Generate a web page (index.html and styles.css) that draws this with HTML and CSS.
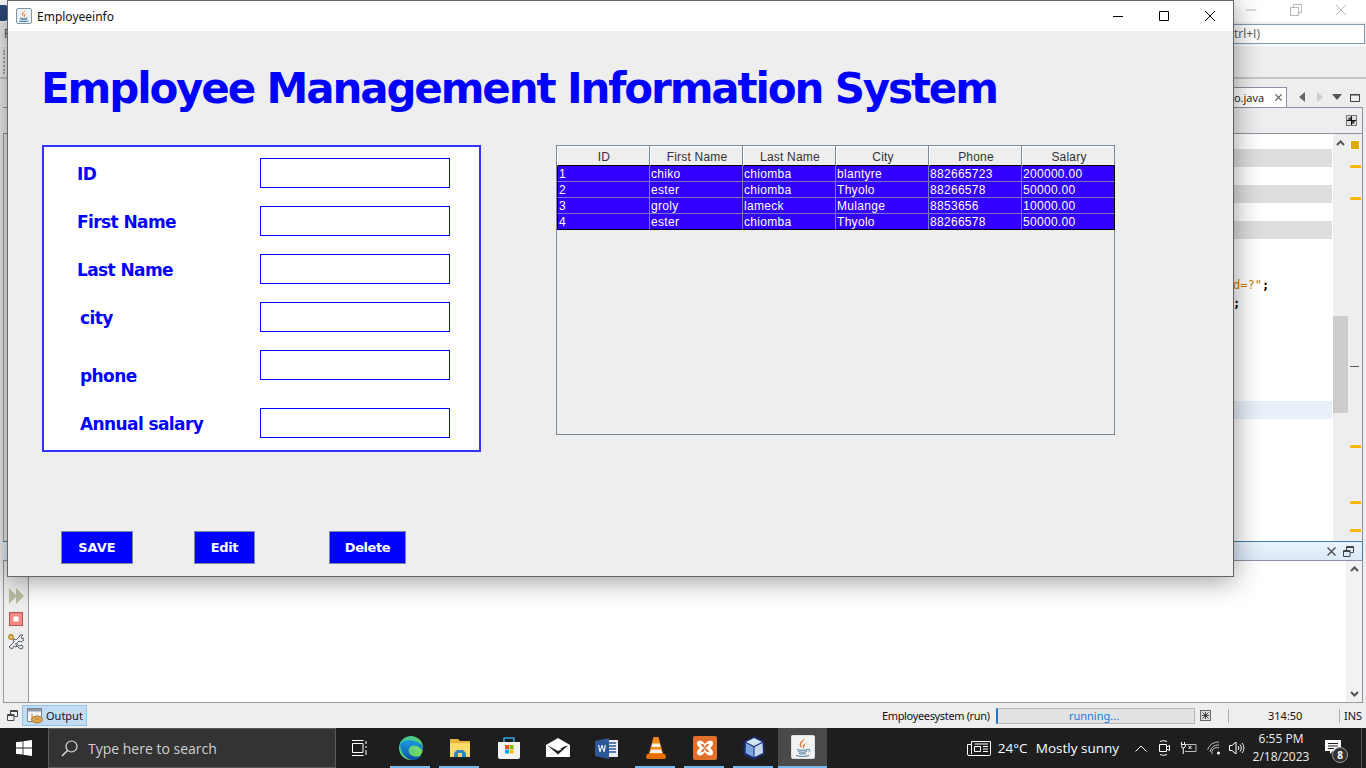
FILE: index.html
```html
<!DOCTYPE html>
<html lang="en">
<head>
<meta charset="utf-8">
<title>Employeeinfo</title>
<link rel="stylesheet" href="styles.css">
</head>
<body>
<div class="ide">
  <div class="ide-title">
    <svg class="ide-logo" width="8" height="16" viewBox="0 0 8 16"><rect x="-8" y="0" width="16" height="16" rx="4" fill="#2c4a78"/></svg>
    <div class="ide-ctrls">
      <svg width="14" height="14" viewBox="0 0 14 14"><path d="M2 7h10" stroke="#b5b5b5" fill="none"/></svg>
      <svg width="14" height="14" viewBox="0 0 14 14"><path d="M1.500 4.500h8v8h-8zM4.500 4.500v-3h8v8h-3" stroke="#b5b5b5" fill="none"/></svg>
      <svg width="14" height="14" viewBox="0 0 14 14"><path d="M2 2l10 10M12 2L2 12" stroke="#b5b5b5" fill="none"/></svg>
    </div>
  </div>
  <div class="ide-menu">
    <span class="menu-letter">F</span>
    <div class="quick-search">trl+I)</div>
  </div>
  <div class="ide-toolbar"><span class="grip"></span></div>
  <div class="workspace">
    <div class="editor-tabs">
      <div class="tab"><span>o.java</span><svg width="9" height="9" viewBox="0 0 9 9"><path d="M.5.5l8 8M8.500.5l-8 8" stroke="#555" stroke-width="1.500" fill="none"/></svg></div>
      <div class="tab-nav">
        <svg width="8" height="12" viewBox="0 0 8 12"><path d="M7 1v10L1 6z" fill="#666"/></svg>
        <svg class="nav-next" width="8" height="12" viewBox="0 0 8 12"><path d="M1 1v10l6-5z" fill="#ccc"/></svg>
        <svg width="12" height="8" viewBox="0 0 12 8"><path d="M1 1h10L6 7z" fill="#555"/></svg>
        <svg width="10" height="9" viewBox="0 0 10 9"><path d="M.5 1.500h9v7h-9z" fill="none" stroke="#444"/><path d="M0 1h10v1.500H0z" fill="#444"/></svg>
      </div>
    </div>
    <div class="editor-toolbar">
      <svg width="11" height="11" viewBox="0 0 11 11"><rect x=".5" y=".5" width="10" height="10" fill="#ddd" stroke="#777"/><path d="M5.500 1v9M1 5.500h9M3 3h2v2H3zM6 6h2v2H6z" stroke="#111" fill="none"/></svg>
    </div>
    <div class="editor-body">
      <div class="side"></div>
      <div class="code">
        <div class="line hl"></div><div class="line"></div>
        <div class="line hl"></div><div class="line"></div>
        <div class="line hl"></div><div class="line"></div>
        <div class="line"></div>
        <div class="line"><span class="str">d=?"</span><span class="semi">;</span></div>
        <div class="line"><span class="semi">;</span></div>
        <div class="line"></div><div class="line"></div><div class="line"></div>
        <div class="line"></div><div class="line"></div>
        <div class="line cur"></div>
      </div>
      <div class="scrollbar"><svg class="up" width="9" height="6" viewBox="0 0 9 6"><path d="M1 5l3.500-3.500L8 5" stroke="#555" stroke-width="2" fill="none"/></svg><div class="thumb"></div></div>
      <div class="gutter">
        <span class="sq"></span>
        <span class="mark m1"></span><span class="mark m2"></span>
        <span class="dot"></span>
        <span class="mark m3"></span><span class="mark m4"></span><span class="mark m5"></span>
      </div>
    </div>
    <div class="output-title">
      <svg width="9" height="9" viewBox="0 0 9 9"><path d="M.5.5l8 8M8.500.5l-8 8" stroke="#555" stroke-width="1.500" fill="none"/></svg>
      <svg width="11" height="11" viewBox="0 0 11 11"><path d="M.5 4.500h6.500v6H.5zM.5 5.500h6.500M3.500 4V.5h7v6H7.500M3.500 1.500h7" fill="none" stroke="#444"/></svg>
    </div>
    <div class="output-body">
      <div class="out-strip">
        <svg width="15" height="16" viewBox="0 0 15 16"><path d="M0 0l8 8-8 8zM7 0l8 8-8 8z" fill="#b8baa0"/></svg>
        <svg class="stop" width="14" height="14" viewBox="0 0 14 14"><rect x=".5" y=".5" width="13" height="13" fill="#f58a84" stroke="#b05550"/><rect x="4.500" y="4.500" width="5" height="5" fill="#fff"/></svg>
        <svg class="tools" width="16" height="16" viewBox="0 0 16 16"><circle cx="3" cy="3" r="2.200" fill="none" stroke="#b8860b" stroke-width="1.400"/><circle cx="3" cy="3" r=".7" fill="#b8860b"/><path d="M1 13l5-5-1-2 1-1 2 1 3-3 1-2h3l-2 2 1 2 2-1v2l-3 2-2-1-3 3 1 2-1 1-2-1-2 3z" fill="#eef0f2" stroke="#5a5f66"/><path d="M8 9l3 3 3-1 1 2-1 2-3-1-3-3z" fill="#eef0f2" stroke="#5a5f66"/></svg>
      </div>
      <div class="out-text"></div>
      <div class="out-scroll">
        <svg width="9" height="6" viewBox="0 0 9 6"><path d="M1 5l3.500-3.500L8 5" stroke="#555" stroke-width="2" fill="none"/></svg>
        <svg width="9" height="6" viewBox="0 0 9 6"><path d="M1 1l3.500 3.500L8 1" stroke="#555" stroke-width="2" fill="none"/></svg>
      </div>
    </div>
  </div>
  <div class="statusbar">
    <svg class="st-restore" width="11" height="11" viewBox="0 0 11 11"><path d="M.5 4.500h6.500v6H.5zM.5 5.500h6.500M3.500 4V.5h7v6H7.500M3.500 1.500h7" fill="none" stroke="#444"/></svg>
    <div class="output-btn">
      <svg width="16" height="16" viewBox="0 0 16 16"><rect x=".5" y=".5" width="14" height="13" fill="#f4f6f8" stroke="#7c8794"/><path d="M1 1h13v2.500H1z" fill="#8d99a8"/><ellipse cx="10" cy="11.500" rx="5.500" ry="3.500" fill="#e0a850" stroke="#a87a30"/><path d="M5 6v5M8 11h4" stroke="#a87a30"/></svg>
      <span>Output</span>
    </div>
    <span class="st-run">Employeesystem (run)</span>
    <div class="progress">running...</div>
    <svg class="st-stop" width="11" height="11" viewBox="0 0 11 11"><rect x=".5" y=".5" width="10" height="10" fill="#ddd" stroke="#666"/><path d="M2.500 2.500l6 6M8.500 2.500l-6 6M5.500 2v7M2 5.500h7" stroke="#444" fill="none"/></svg>
    <span class="st-sep"></span>
    <span class="st-pos">314:50</span>
    <span class="st-sep2"></span>
    <span class="st-ins">INS</span>
  </div>
  <div class="taskbar">
    <div class="tb-start">
      <svg width="16" height="16" viewBox="0 0 16 16"><path d="M0 2.300l6.600-.9v6.200H0zM7.400 1.300L16 0v7.600H7.400zM0 8.400h6.600v6.200L0 13.700zM7.400 8.400H16V16l-8.600-1.200z" fill="#fff"/></svg>
    </div>
    <div class="tb-search">
      <svg width="17" height="17" viewBox="0 0 17 17"><circle cx="10.500" cy="6.500" r="5.500" fill="none" stroke="#ddd" stroke-width="1.200"/><path d="M6.500 10.500L1 16" stroke="#ddd" stroke-width="1.400"/></svg>
      <span>Type here to search</span>
    </div>
    <div class="tb-apps">
      <div class="tb-app tv">
        <svg width="16" height="16" viewBox="0 0 16 16"><path d="M.5 3.500h10.500v9H.5zM0 .5h11.500M0 15.500h11.500M14 1v3M14 6v2M14 10v5" stroke="#fff" fill="none"/></svg>
      </div>
      <div class="tb-app edge on">
        <svg width="24" height="24" viewBox="0 0 24 24"><defs><linearGradient id="eg" x1="0" y1="0" x2="1" y2="1"><stop offset="0" stop-color="#35c1a1"/><stop offset="1" stop-color="#7fdc4e"/></linearGradient><linearGradient id="eb" x1="0" y1="0" x2="0" y2="1"><stop offset="0" stop-color="#1a9ce0"/><stop offset="1" stop-color="#0c4fa8"/></linearGradient></defs><circle cx="12" cy="12" r="12" fill="url(#eg)"/><path d="M1 9c1 8 6 15 13 15 4 0 7-2 9-5-3 2-8 2-11 0-3-2-3-6-1-8 2-2 6-2 9 0 3 2 4 4 4 4 1-3-1-7-5-9-7-3-16-2-18 3z" fill="url(#eb)"/><path d="M11 13c1-3 8-3 10 1 0 1-2 2-4 1-1 0-1-2-3-2-1 0-2 0-3 0z" fill="#fff" opacity=".15"/></svg>
      </div>
      <div class="tb-app on">
        <svg width="22" height="20" viewBox="0 0 22 20"><path d="M1 1h8l2 2h10v16H1z" fill="#e8b53c"/><path d="M1 5h20v14H1z" fill="#fbd96a"/><path d="M8 12h6l3 3v4H5v-4z" fill="#2a86c8"/><path d="M9 15h4v4H9z" fill="#fbd96a"/></svg>
      </div>
      <div class="tb-app">
        <svg width="24" height="24" viewBox="0 0 24 24"><path d="M7 6V2h10v4" fill="none" stroke="#28a8e8" stroke-width="1.500"/><path d="M1 6h22v15a2 2 0 0 1-2 2H3a2 2 0 0 1-2-2z" fill="#f3f3f3"/><path d="M8 9h4v4H8z" fill="#f25022"/><path d="M12.500 9h4v4h-4z" fill="#7fba00"/><path d="M8 13.500h4v4H8z" fill="#00a4ef"/><path d="M12.500 13.500h4v4h-4z" fill="#ffb900"/></svg>
      </div>
      <div class="tb-app">
        <svg width="24" height="20" viewBox="0 0 24 20"><path d="M0 7L12 0l12 7v12H0z" fill="#fff"/><path d="M1 7l11 6 4-2-6-1 12-2.500-10 9z" fill="#222"/><path d="M3 7h18l-9 5z" fill="#fff"/></svg>
      </div>
      <div class="tb-app">
        <svg width="23" height="21" viewBox="0 0 23 21"><path d="M6 2h17v17H6z" fill="#e8edf5"/><path d="M14 5h7M14 8h7M14 11h7M14 14h7" stroke="#2b5797" stroke-width="1.500"/><path d="M0 3l14-3v21L0 18z" fill="#2b5797"/><path d="M3 7l1.500 7h1l1.500-5 1.500 5h1L11 7H9.800l-.9 4.700L7.500 7h-1L5.100 11.700 4.200 7z" fill="#fff"/></svg>
      </div>
      <div class="tb-app on">
        <svg width="20" height="22" viewBox="0 0 20 22"><path d="M7.500 0h5l5 18h-15z" fill="#f28a12"/><path d="M6.500 6.500h7l1 3.500h-9zM5 12.500h10l1 3.500H4z" fill="#f4f0e8"/><path d="M1 17h18l1 3c0 1-1 2-2 2H2c-1 0-2-1-2-2z" fill="#e86e08"/></svg>
      </div>
      <div class="tb-app on">
        <svg width="24" height="24" viewBox="0 0 24 24"><rect width="24" height="24" rx="2" fill="#e0702a"/><path d="M5 5c3-1 5 0 7 3 2-3 4-4 7-3 2 2 1 5-2 7 3 2 4 5 2 7-3 1-5 0-7-3-2 3-4 4-7 3-2-2-1-5 2-7-3-2-4-5-2-7zM8 8c0 2 2 3 4 4 2-1 4-2 4-4-2-1-3 1-4 3-1-2-2-4-4-3zM8 16c2 1 3-1 4-3 1 2 2 4 4 3 0-2-2-3-4-4-2 1-4 2-4 4z" fill="#fff" fill-rule="evenodd"/></svg>
      </div>
      <div class="tb-app on">
        <svg width="22" height="24" viewBox="0 0 22 24"><path d="M11 0l10 5 1 13-11 6-10-5L0 6z" fill="#1a2a6c"/><path d="M11 2l8 4-8 4-8-4z" fill="#d0e6f8"/><path d="M3 7l7.500 4v10L2.500 17z" fill="#7aa6e0"/><path d="M11.500 11l8-4 .5 10-8.500 4z" fill="#c4d8f0"/></svg>
      </div>
      <div class="tb-app java">
        <svg width="24" height="24" viewBox="0 0 24 24"><rect width="24" height="24" rx="3" fill="#f2f2f2" stroke="#c8d0d8"/><path d="M13 3c1 3-3 4-3 7 0 1 1 2 1 3-2-1-3-3-2-5 1-2 4-3 4-5zM15 7c0 2-2 3-2 5 0 .5 0 1 .5 1.500-1.500-.5-2-2-1.500-3 .5-1.500 3-2 3-3.500z" fill="#e2701e"/><path d="M6 14.500c2 1 9 1 11 0M7 16.500c2 1 7 1 9 0M8 18.500c2 .7 5 .7 7 0M5 20.500c3 1.200 10 1.200 13 0M17 14.500c2-.5 3 1.500.5 2.500" fill="none" stroke="#4a7a9c" stroke-width="1"/></svg>
      </div>
    </div>
    <div class="tray">
      <svg class="news" width="24" height="16" viewBox="0 0 24 16"><path d="M4.500 1.500h19v13a1 1 0 0 1-1 1H2a1.500 1.500 0 0 1-1.500-1.500V4.500h4zM4.500 4.500V14" fill="none" stroke="#fff"/><path d="M7.500 6.500h6v5h-6z" fill="none" stroke="#fff"/><path d="M16 6.500h5M16 9h5M16 11.500h5M7.500 4h13.500" stroke="#fff" fill="none"/></svg>
      <span class="temp">24°C</span>
      <span class="weather">Mostly sunny</span>
      <svg class="chev" width="12" height="7" viewBox="0 0 12 7"><path d="M.500 6.500L6 1l5.500 5.500" stroke="#fff" fill="none"/></svg>
      <svg class="ti meet" width="12" height="16" viewBox="0 0 12 16"><path d="M2 1.500c2-1 5-1 7 0M2 14.500c2 1 5 1 7 0M1.500 4.500h7v7h-7zM8.500 7l3-1.500v5l-3-1.500" stroke="#fff" fill="none"/></svg>
      <svg class="ti batt" width="16" height="14" viewBox="0 0 16 14"><path d="M.500 1v2M3.500 1v2M0 3.500h4.500v1.500L3 7H1.500L0 5zM2.250 7v6" stroke="#fff" fill="none"/><path d="M5 3.500h10v7H4" stroke="#bbb" fill="none"/><path d="M7.500 5l3 3M10.500 5l-3 3" stroke="#fff" fill="none"/></svg>
      <svg class="ti wifi" width="14" height="14" viewBox="0 0 14 14"><path d="M.500 9A11 11 0 0 1 12 1M3 11A8 8 0 0 1 12 4M5 13A5 5 0 0 1 12 7" stroke="#bbb" fill="none"/><circle cx="11.500" cy="12" r="1.500" fill="#fff"/></svg>
      <svg class="ti vol" width="16" height="14" viewBox="0 0 16 14"><path d="M.500 4.500h2.500L7 1v12L3 9.500H.500z" stroke="#fff" fill="none"/><path d="M9 5c1 1 1 3 0 4M11 3.500c1.800 2 1.800 5 0 7M13 2c2.500 3 2.500 7 0 10" stroke="#fff" fill="none"/></svg>
      <div class="clock"><span>6:55 PM</span><span>2/18/2023</span></div>
      <div class="notif">
        <svg width="16" height="14" viewBox="0 0 16 14"><path d="M0 0h16v11H8l-3 3v-3H0z" fill="#fff"/><path d="M3 3.500h10M3 6h10M3 8.500h6" stroke="#1e1e1e"/></svg>
        <span class="badge">8</span>
      </div>
      <span class="desk-edge"></span>
    </div>
  </div>
</div>

<div class="window">
  <div class="win-title">
    <svg class="win-icon" width="16" height="16" viewBox="0 0 16 16"><rect x=".5" y=".5" width="15" height="15" rx="1.500" fill="#eef2f6" stroke="#7d96ac"/><path d="M9 2c.6 2-2 2.600-2 4.600 0 .7.500 1.300.7 2-1.400-.700-2-2-1.400-3.300C7 4 9 3.300 9 2zM10.200 4.700c0 1.300-1.400 2-1.400 3.300l.3 1c-1-.300-1.300-1.300-1-2 .4-1 2.100-1.300 2.100-2.300z" fill="#e2701e"/><path d="M4 10c1.500.6 6 .6 7.500 0M4.500 11.500c1.500.5 5 .5 6.500 0M3 13c2 .8 7 .8 9.500 0" fill="none" stroke="#4a7a9c"/></svg>
    <span class="win-name">Employeeinfo</span>
    <div class="win-ctrls">
      <svg width="10" height="10" viewBox="0 0 10 10"><path d="M0 5.500h10" stroke="#000" fill="none"/></svg>
      <svg width="10" height="10" viewBox="0 0 10 10"><path d="M.5.500h9v9h-9z" stroke="#000" fill="none"/></svg>
      <svg width="10" height="10" viewBox="0 0 10 10"><path d="M0 0l10 10M10 0L0 10" stroke="#000" fill="none"/></svg>
    </div>
  </div>
  <div class="win-body">
    <h1 class="headline">Employee Management Information System</h1>
    <div class="main-row">
      <div class="form-panel">
        <div class="form-row"><label class="lbl">ID</label><div class="field"></div></div>
        <div class="form-row"><label class="lbl">First Name</label><div class="field"></div></div>
        <div class="form-row"><label class="lbl">Last Name</label><div class="field"></div></div>
        <div class="form-row"><label class="lbl lbl-in">city</label><div class="field"></div></div>
        <div class="form-row row-phone"><label class="lbl lbl-in lbl-low">phone</label><div class="field"></div></div>
        <div class="form-row"><label class="lbl lbl-in">Annual salary</label><div class="field"></div></div>
      </div>
      <div class="table-box">
        <table class="grid">
          <thead>
            <tr><th>ID</th><th>First Name</th><th>Last Name</th><th>City</th><th>Phone</th><th>Salary</th></tr>
          </thead>
          <tbody>
            <tr><td>1</td><td>chiko</td><td>chiomba</td><td>blantyre</td><td>882665723</td><td>200000.00</td></tr>
            <tr><td>2</td><td>ester</td><td>chiomba</td><td>Thyolo</td><td>88266578</td><td>50000.00</td></tr>
            <tr><td>3</td><td>groly</td><td>lameck</td><td>Mulange</td><td>8853656</td><td>10000.00</td></tr>
            <tr><td>4</td><td>ester</td><td>chiomba</td><td>Thyolo</td><td>88266578</td><td>50000.00</td></tr>
          </tbody>
        </table>
      </div>
    </div>
    <div class="actions">
      <button class="btn btn-save">SAVE</button>
      <button class="btn btn-edit">Edit</button>
      <button class="btn btn-del">Delete</button>
    </div>
  </div>
</div>
</body>
</html>
```

FILE: styles.css
```css
* { box-sizing: border-box; }
html, body { margin: 0; padding: 0; width: 1366px; height: 768px; overflow: hidden; }
body { font-family: "Liberation Sans", Arial, sans-serif; font-size: 12px; background: #eeeeee; color: #111; position: relative; }

.ide { width: 1366px; height: 768px; display: flex; flex-direction: column; }
.ide-title { height: 22px; background: #fff; display: flex; justify-content: space-between; align-items: flex-start; }
.ide-logo { margin-top: 5px; display: block; }
.ide-ctrls { display: flex; gap: 31px; margin: 3px 18px 0 0; }
.ide-ctrls svg { display: block; }
.ide-menu { height: 24px; background: #f0f0f0; display: flex; justify-content: space-between; align-items: center; border-bottom: 1px solid #fff; }
.menu-letter { padding-left: 4px; color: #555; font-size: 12px; }
.quick-search { width: 165px; height: 20px; margin-right: 1px; background: #fff; border: 1px solid #7f9db9; padding-left: 33px; line-height: 18px; font-size: 12px; color: #555; font-family: "Open Sans", sans-serif; }
.ide-toolbar { height: 33px; background: #eeeeee; border-bottom: 2px solid #c4c4c4; display: flex; align-items: center; padding-left: 3px; }
.grip { width: 3px; height: 24px; border-left: 2px dotted #aaa; }
.workspace { flex: 1; padding: 8px 3px 0 3px; display: flex; flex-direction: column; min-height: 0; }
.editor-tabs { height: 20px; display: flex; justify-content: flex-end; align-items: flex-end; }
.tab { width: 54px; height: 20px; background: #fff; border: 1px solid #8a93a3; border-bottom: none; display: flex; align-items: center; justify-content: flex-end; gap: 11px; padding-right: 4px; font-size: 11px; font-family: "Open Sans", sans-serif; color: #111; margin-right: 9px; }
.tab-nav { width: 67px; height: 20px; display: flex; align-items: center; gap: 7px; padding-left: 2px; }
.tab-nav svg { display: block; flex: none; }
.nav-next { margin-left: 3px; }
.editor-toolbar { height: 27px; background: #eeeeee; border: 1px solid #8a93a3; border-left: none; display: flex; justify-content: flex-end; align-items: center; padding-right: 5px; }
.editor-body { height: 407px; display: flex; border-right: 1px solid #8a93a3; background: #fff; }
.side { width: 5px; flex: none; background: #eeeeee; border-left: 1px solid #999; }
.code { flex: 1; padding-top: 15px; margin-right: 1px; }
.line { height: 18px; line-height: 20px; padding-left: 1225px; font-family: "DejaVu Sans Mono", monospace; font-size: 12px; white-space: nowrap; }
.hl { background: #dedede; }
.cur { background: #e8eff8; }
.str { color: #ce7b00; }
.semi { color: #000; font-weight: bold; }
.scrollbar { width: 15px; background: #eeeeee; position: relative; }
.up { position: absolute; left: 3px; top: 6px; display: block; }
.thumb { height: 97px; margin-top: 182px; background: #cccccc; }
.gutter { width: 14px; background: #eeeeee; position: relative; }
.sq { position: absolute; left: 3px; top: 7px; width: 8px; height: 8px; background: #e0a800; box-shadow: 0 0 0 1px #fff; }
.mark { position: absolute; left: 2px; width: 11px; height: 3px; background: #ffb900; }
.m1 { top: 31px; }
.m2 { top: 63px; }
.m3 { top: 311px; }
.m4 { top: 367px; }
.m5 { top: 395px; }
.dot { position: absolute; left: 2px; top: 232px; width: 9px; height: 1px; background: #555; }
.output-title { height: 20px; border-top: 1px solid #3f7fa8; border-bottom: 1px solid #8a93a3; border-right: 1px solid #3f7fa8; background: linear-gradient(#eaf3fd, #dbe9f9); display: flex; justify-content: flex-end; align-items: center; gap: 7px; padding-right: 8px; }
.output-body { flex: 1; display: flex; border-left: 1px solid #999; border-right: 1px solid #8a93a3; border-bottom: 1px solid #999; background: #fff; min-height: 0; }
.out-strip { width: 25px; background: #eeeeee; border-right: 1px solid #999; display: flex; flex-direction: column; align-items: center; padding-top: 27px; gap: 8px; }
.out-strip svg { display: block; }
.out-text { flex: 1; }
.out-scroll { width: 16px; background: #f2f2f2; display: flex; flex-direction: column; justify-content: space-between; align-items: center; padding: 5px 0; }
.out-scroll svg { display: block; }

.statusbar { height: 25px; background: #eeeeee; display: flex; align-items: center; padding-left: 7px; }
.statusbar > * { flex: none; }
.st-restore { margin-right: 4px; }
.output-btn { width: 65px; height: 21px; background: #c2ddf3; border: 1px solid #8fc4f0; display: flex; align-items: center; gap: 3px; padding-left: 4px; font-size: 11px; font-family: "Noto Sans", sans-serif; color: #111; }
.st-run { margin-left: 795px; width: 114px; font-size: 11px; letter-spacing: -.35px; font-family: "Noto Sans", sans-serif; color: #111; white-space: nowrap; }
.progress { width: 199px; height: 16px; background: #e2e2e2; border: 1px solid #b4b4b4; border-left: 2px solid #2a6fc8; padding-right: 4px; text-align: center; line-height: 13px; font-size: 11px; font-family: "Noto Sans", sans-serif; color: #1e78e6; }
.st-stop { margin-left: 5px; }
.st-sep { width: 1px; height: 14px; background: #aaa; margin-left: 17px; }
.st-pos { margin-left: 39px; width: 34px; font-size: 11px; font-family: "Noto Sans", sans-serif; color: #111; white-space: nowrap; }
.st-sep2 { width: 1px; height: 14px; background: #aaa; margin-left: 37px; }
.st-ins { margin-left: 4px; font-size: 11px; font-family: "Noto Sans", sans-serif; color: #111; }

.taskbar { height: 40px; background: #1e1e1e; display: flex; align-items: stretch; color: #fff; font-family: "Open Sans", "Noto Sans", sans-serif; position: relative; }
.tb-start { width: 48px; display: flex; align-items: center; justify-content: center; }
.tb-search { width: 288px; border: 1px solid #5a5a5a; background: #333333; display: flex; align-items: center; padding-left: 12px; gap: 10px; font-size: 14px; color: #d0d0d0; }
.tb-search svg { flex: none; }
.tb-apps { display: flex; margin-left: 1px; }
.tb-app { width: 49px; display: flex; align-items: center; justify-content: center; position: relative; }
.tv svg { margin-right: 3px; }
.tb-app.on::after { content: ""; position: absolute; left: 4px; right: 5px; bottom: 0; height: 2px; background: #76b9ed; }
.tb-app.java { background: #4a4a4a; border-bottom: 2px solid #76b9ed; }
.tray { position: absolute; right: 0; top: 0; bottom: 0; display: flex; align-items: center; font-size: 13.5px; }
.news { margin-right: 7px; display: block; }
.temp { width: 38px; }
.weather { margin-right: 16px; white-space: nowrap; }
.chev { margin-right: 11px; display: block; }
.ti { display: block; }
.meet { margin-right: 11px; }
.batt { margin-right: 10px; }
.wifi { margin-right: 8px; }
.vol { margin-right: 3px; }
.clock { width: 66px; display: flex; flex-direction: column; align-items: center; font-size: 12px; line-height: 18px; color: #eee; }
.notif { position: relative; width: 36px; height: 40px; margin-left: 11px; display: flex; align-items: center; }
.notif svg { margin-top: -3px; }
.badge { position: absolute; left: 7px; top: 19px; width: 16px; height: 16px; border-radius: 50%; background: #333; border: 1px solid #999; color: #fff; font-size: 10px; font-weight: bold; text-align: center; line-height: 14px; }
.desk-edge { width: 1px; height: 40px; background: #555; margin-right: 4px; }

.window { position: absolute; left: 7px; top: 0; width: 1227px; height: 577px; background: #eeeeee; border: 1px solid #666; box-shadow: 0 3px 26px rgba(0, 0, 0, .42); display: flex; flex-direction: column; }
.win-title { height: 30px; background: #fff; display: flex; align-items: center; padding-left: 8px; flex: none; }
.win-icon { display: block; margin-right: 5px; }
.win-name { font-family: "Noto Sans", sans-serif; font-size: 12px; color: #111; }
.win-ctrls { margin-left: auto; display: flex; gap: 36px; padding-right: 18px; }
.win-ctrls svg { display: block; }
.win-body { flex: 1; padding-left: 34px; }
.headline { margin: 33px 0 31px -1px; height: 50px; line-height: 50px; font-family: "DejaVu Sans", Verdana, sans-serif; font-weight: bold; font-size: 42px; color: #0000ff; white-space: nowrap; letter-spacing: -2.13px; }
.main-row { display: flex; align-items: flex-start; gap: 75px; }
.form-panel { width: 439px; height: 307px; background: #fff; border: 2px solid #3333ff; padding: 11px 0 0 33px; display: flex; flex-direction: column; gap: 18px; }
.form-row { height: 30px; display: flex; flex: none; }
.row-phone { margin-bottom: 10px; }
.lbl { width: 183px; height: 30px; line-height: 32px; font-family: "DejaVu Sans", Verdana, sans-serif; font-weight: bold; font-size: 17px; letter-spacing: -.6px; color: #0000ff; white-space: nowrap; flex: none; }
.lbl-in { padding-left: 3px; }
.lbl-low { margin-top: 10px; }
.field { width: 190px; height: 30px; background: #fff; border: 1px solid #0000ff; flex: none; }

.table-box { width: 559px; height: 290px; border: 1px solid #7a8a99; background: #eeeeee; }
.grid { width: 558px; border-collapse: separate; border-spacing: 0; table-layout: fixed; font-size: 12px; font-family: "Liberation Sans", Arial, sans-serif; }
.grid th { height: 20px; padding: 2px 0 0 1px; font-weight: normal; text-align: center; letter-spacing: .2px; color: #333; background: linear-gradient(#ffffff 1px, #eeeeee 2px); border-right: 1px solid #7a8a99; border-left: 1px solid #fff; border-bottom: 1px solid #000; }
.grid td { height: 16px; padding: 1px 0 0 1px; line-height: 14px; letter-spacing: .3px; color: #fff; background: #3300ff; border-right: 1px solid #7777cc; border-bottom: 1px solid #7777cc; white-space: nowrap; overflow: hidden; }
.grid tr:last-child td { border-bottom: 1px solid #000; }
.grid td:last-child { border-right: 1px solid #000; }
.grid td:first-child { border-left: 1px solid #000; }

.actions { display: flex; margin: 79px 0 0 19px; align-items: flex-start; }
.btn { height: 33px; padding: 0; background: #0000ff; border: 1px solid #7a8aa8; color: #fff; font-family: "DejaVu Sans", Verdana, sans-serif; font-weight: bold; font-size: 13px; letter-spacing: -.4px; }
.btn-save { width: 72px; letter-spacing: 0; }
.btn-edit { width: 61px; margin-left: 61px; }
.btn-del { width: 77px; margin-left: 74px; }
```
